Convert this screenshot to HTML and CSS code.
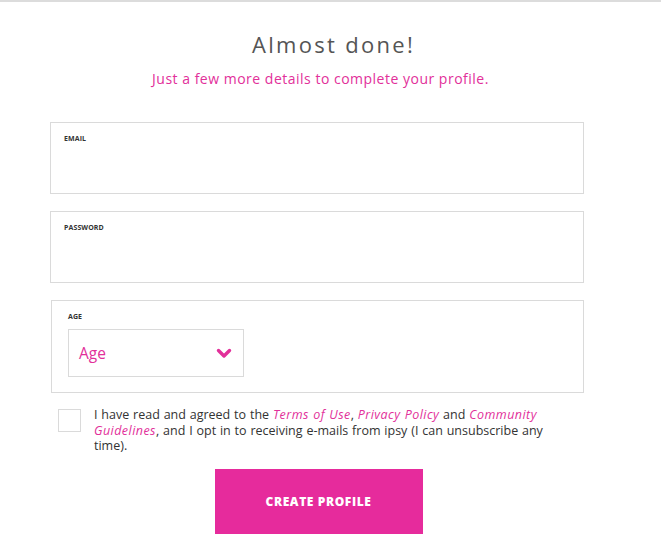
FILE: index.html
```html
<html>
<head>
    <link rel="stylesheet" href="styles.css">
</head>
<body>
    <div class="topline"></div>
    <div class="page">
        <h1 class="title">Almost done!</h1>
        <p class="subtitle">Just a few more details to complete your profile.</p>
        <form class="signup" onsubmit="event.preventDefault();" autocomplete="off">
            <div class="field">
                <label>EMAIL</label>
                <input type="text" id="email">
            </div>
            <div class="field">
                <label>PASSWORD</label>
                <input type="password" id="password">
            </div>
            <div class="field age-field">
                <label>AGE</label>
                <div class="select">
                    <span>Age</span>
                    <svg width="16" height="11" viewBox="0 0 16 11"><path d="M2.5 2.5 L8 8 L13.5 2.5" fill="none" stroke="#e2309a" stroke-width="3.4" stroke-linecap="round" stroke-linejoin="round"/></svg>
                </div>
            </div>
            <div class="agree">
                <div class="box"></div>
                <p>I have read and agreed to the <a>Terms of Use</a>, <a>Privacy Policy</a> and <a>Community</a> <a>Guidelines</a>, and I opt in to receiving e-mails from ipsy (I can unsubscribe any time).</p>
            </div>
            <div class="actions">
                <button type="submit">CREATE PROFILE</button>
            </div>
        </form>
    </div>
</body>
</html>
```

FILE: styles.css
```css
body{
    margin: 0;
    padding: 0;
    background: #fff;
    font-family: "Open Sans", sans-serif;
}
.topline{
    height: 2px;
    background: #dcdcdc;
}
.page{
    width: 661px;
    display: flex;
    flex-direction: column;
    align-items: center;
}
.title{
    margin: 28px 0 0 6px;
    font-size: 22px;
    font-weight: 400;
    color: #555;
    line-height: 28px;
    letter-spacing: 2.3px;
}
.subtitle{
    margin: 11px 0 0 -20px;
    font-size: 14px;
    color: #e2309a;
    line-height: 20px;
    letter-spacing: 0.5px;
}
.signup{
    align-self: flex-start;
    width: 534px;
    margin-top: 33px;
    margin-left: 50px;
    display: flex;
    flex-direction: column;
}
.field{
    border: 1px solid #dadada;
    padding: 11px 13px 0;
    box-sizing: border-box;
    height: 72px;
    margin-bottom: 17px;
}
.field label{
    display: block;
    font-size: 7px;
    font-weight: 700;
    color: #333;
    letter-spacing: 0.1px;
}
.field input{
    border: none;
    outline: none;
    width: 100%;
    margin-top: 10px;
    font-size: 14px;
}
.age-field{
    height: 93px;
    margin-left: 1px;
    margin-bottom: 0;
    padding: 11px 16px 0;
}
.select{
    margin-top: 8px;
    width: 176px;
    height: 48px;
    border: 1px solid #dadada;
    box-sizing: border-box;
    display: flex;
    align-items: center;
    justify-content: space-between;
    padding: 0 11px 0 10px;
    color: #e2309a;
    font-size: 15.5px;
}
.agree{
    display: flex;
    align-items: flex-start;
    margin-top: 16px;
    margin-left: 8px;
}
.box{
    flex: none;
    width: 21px;
    height: 21px;
    border: 1px solid #dadada;
}
.agree p{
    margin: -2px 0 0 13px;
    font-size: 12.5px;
    line-height: 15.5px;
    color: #333;
    width: 462px;
    word-spacing: 0.6px;
}
.agree a{
    color: #e2309a;
    font-style: italic;
    letter-spacing: 0.45px;
}
.actions{
    display: flex;
    justify-content: center;
    margin-top: 15px;
    margin-left: 3px;
}
.actions button{
    width: 208px;
    height: 65px;
    border: none;
    background: #e62b9c;
    color: #fff;
    font-family: "Open Sans", sans-serif;
    font-weight: 800;
    font-size: 12px;
    letter-spacing: 0.6px;
}
```
